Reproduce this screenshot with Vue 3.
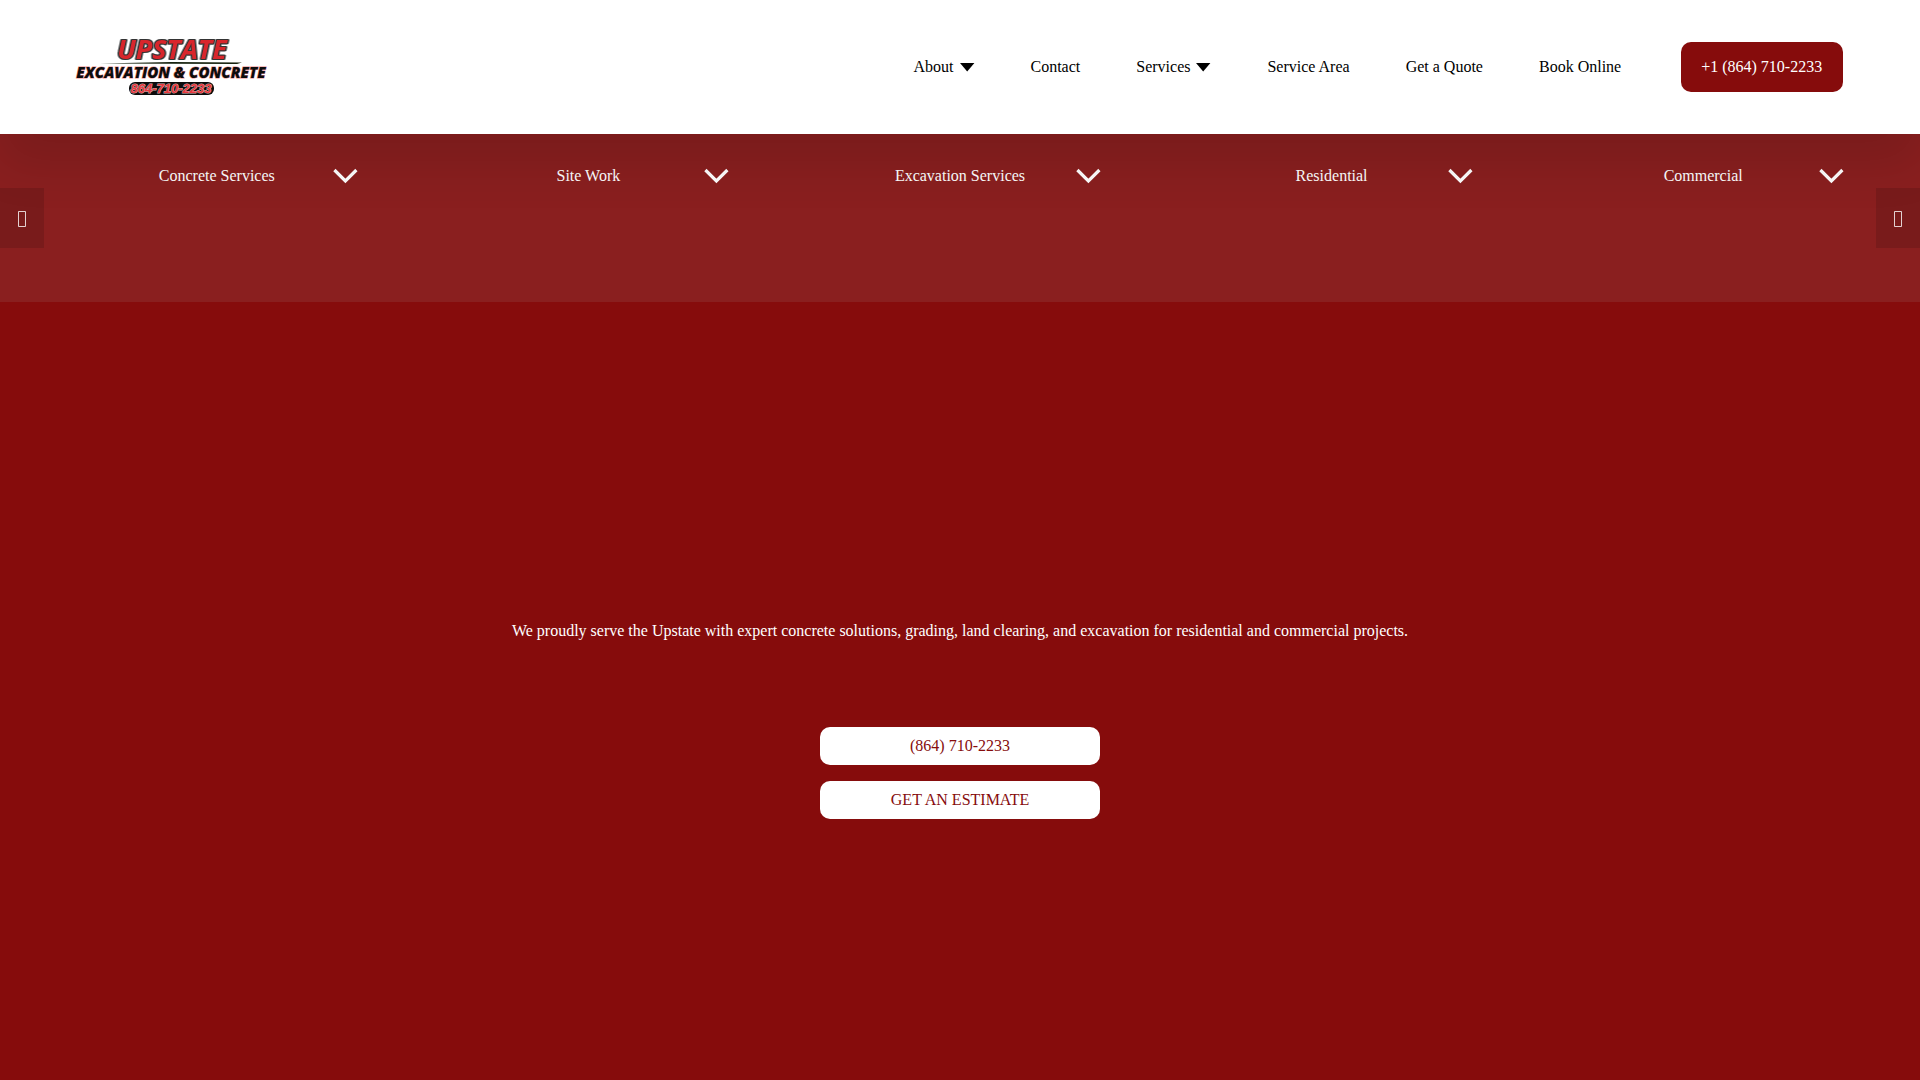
<script setup>
const links = [
  { label: 'About', menu: true },
  { label: 'Contact' },
  { label: 'Services', menu: true },
  { label: 'Service Area' },
  { label: 'Get a Quote' },
  { label: 'Book Online' },
]
const services = ['Concrete Services', 'Site Work', 'Excavation Services', 'Residential', 'Commercial']
const arrows = [
  { side: 'prev', label: 'Previous' },
  { side: 'next', label: 'Next' },
]
</script>

<template>
  <div class="page">
    <header class="header">
      <a href="#" class="logo" aria-label="Upstate Excavation &amp; Concrete">
        <svg width="190" height="60" viewBox="0 0 190 60">
          <text class="logo-name" x="95" y="22" text-anchor="middle">UPSTATE</text>
          <path d="M23 26.5 L95 25 L165 25.4 L160 27 Z" fill="#17220f" />
          <text class="logo-trade" x="94" y="41" text-anchor="middle">EXCAVATION &amp; CONCRETE</text>
          <rect x="52" y="45" width="85" height="13" rx="6" fill="#0c0c0c" />
          <text class="logo-phone" x="94" y="56" text-anchor="middle">864-710-2233</text>
        </svg>
      </a>
      <nav class="nav" aria-label="Main">
        <a v-for="l in links" :key="l.label" href="#" class="nav-link">
          {{ l.label }}
          <svg v-if="l.menu" width="16" height="9" viewBox="0 0 16 9"><path d="M1 0H15.400L8.200 8.400Z" /></svg>
        </a>
        <a href="tel:+18647102233" class="call">+1 (864) 710-2233</a>
      </nav>
    </header>

    <section class="band">
      <ul class="services">
        <li v-for="s in services" :key="s">
          <a href="#" class="service">
            <span>{{ s }}</span>
            <svg width="24" height="14" viewBox="0 0 24 14"><path d="M1.4 1L12.4 12L23.4 1" fill="none" stroke="#fff" stroke-width="3.2" /></svg>
          </a>
        </li>
      </ul>
      <button v-for="a in arrows" :key="a.side" type="button" class="arrow" :class="a.side" :aria-label="a.label">
        <svg width="8" height="16" viewBox="0 0 8 16">
          <path d="M0.5 0.5H7.500V15.5H0.5Z" fill="none" stroke="#fff" stroke-opacity="0.8" />
        </svg>
      </button>
    </section>

    <main class="hero">
      <p class="lead">We proudly serve the Upstate with expert concrete solutions, grading, land clearing, and excavation for residential and commercial projects.</p>
      <div class="actions">
        <a href="tel:8647102233" class="action">(864) 710-2233</a>
        <a href="#" class="action">GET AN ESTIMATE</a>
      </div>
    </main>
  </div>
</template>

<style>
body {
  margin: 0;
  background: #860c0c;
}
</style>

<style scoped>
.page {
  min-height: 100vh;
  display: flex;
  flex-direction: column;
  font: 16px/18px "Liberation Serif", serif;
  background: #860c0c;
  color: #fff;
}
a {
  color: inherit;
  text-decoration: none;
}
.header {
  position: relative;
  z-index: 1;
  box-sizing: border-box;
  min-height: 134px;
  padding: 0 4%;
  display: flex;
  align-items: center;
  justify-content: space-between;
  background: #fff;
  color: #000;
  box-shadow: 0 30px 50px rgba(0, 0, 0, 0.12);
}
.logo svg {
  display: block;
  overflow: visible;
}
.logo-name {
  font: italic 700 27px "Open Sans", sans-serif;
  fill: #d8262c;
  stroke: #333;
  stroke-width: 2px;
  stroke-linejoin: round;
  paint-order: stroke;
  filter: drop-shadow(1px 0 0 #8d8f90) drop-shadow(-1px 0 0 #8d8f90);
}
.logo-trade {
  font: italic 800 15px "Open Sans", sans-serif;
  fill: #0c0c0c;
  stroke: #e88;
  stroke-width: 1px;
  paint-order: stroke;
}
.logo-phone {
  font: italic 700 13px "Liberation Sans", sans-serif;
  fill: #e8383d;
  stroke: #c9b3b3;
  stroke-width: 1px;
  paint-order: stroke;
}
.nav {
  display: flex;
  align-items: center;
  gap: 56px;
}
.nav-link {
  display: flex;
  align-items: center;
  gap: 5px;
}
.call {
  margin-left: 4px;
  padding: 16px 21px 16px 20px;
  border-radius: 10px;
  background: #860c0c;
  color: #fff;
}
.band {
  position: relative;
  min-height: 168px;
  background: #8a1f1f;
}
.services {
  margin: 0;
  padding: 33px 4% 0;
  display: flex;
  justify-content: space-between;
  list-style: none;
}
.service {
  width: 280px;
  display: grid;
  grid-template-columns: 24px 1fr 24px;
  align-items: center;
  text-align: center;
}
.service span {
  grid-column: 2;
}
.service svg {
  overflow: visible;
}
.arrow {
  position: absolute;
  top: 54px;
  z-index: 2;
  box-sizing: border-box;
  width: 44px;
  height: 60px;
  padding: 2px 0 0;
  border: 0;
  display: flex;
  align-items: center;
  justify-content: center;
  background: rgba(0, 0, 0, 0.12);
}
.prev {
  left: 0;
}
.next {
  right: 0;
}
.hero {
  flex: 1;
  padding: 320px 4% 80px;
  display: flex;
  flex-direction: column;
  align-items: center;
  gap: 87px;
}
.lead {
  margin: 0;
  text-align: center;
}
.actions {
  display: flex;
  flex-direction: column;
  gap: 16px;
}
.action {
  width: 280px;
  padding: 10px 0;
  border-radius: 10px;
  background: #fff;
  color: #860c0c;
  text-align: center;
}
</style>
